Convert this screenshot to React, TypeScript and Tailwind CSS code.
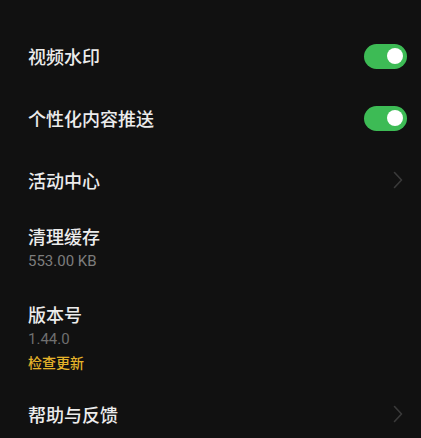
import React from 'react';

const font = { fontFamily: '"Noto Sans CJK SC", "Liberation Sans", sans-serif' };
const num = { fontFamily: '"Roboto", "Liberation Sans", sans-serif' };

function Toggle() {
    return (
        <div className="w-[43px] h-[25px] rounded-full bg-[#3dbb55] flex items-center justify-end pr-[4px]">
            <div className="w-[16px] h-[16px] rounded-full bg-white" />
        </div>
    );
}

function Chevron() {
    return (
        <svg width="10" height="18" viewBox="0 0 10 18" fill="none" className="mr-[4px]">
            <path d="M1.5 1.5 L8.5 9 L1.5 16.5" stroke="#3a3a3a" strokeWidth="1.6" strokeLinecap="round" strokeLinejoin="round" />
        </svg>
    );
}

export default function App() {
    return (
        <div className="w-[421px] h-[438px] bg-[#111111] overflow-hidden pt-[25px] pl-[28px] pr-[14px]" style={font}>
            {/* 开关 */}
            <div className="h-[62px] flex items-center justify-between">
                <span className="text-[18px] leading-[26px] font-medium text-[#ececec]">视频水印</span>
                <Toggle />
            </div>
            <div className="h-[62px] flex items-center justify-between">
                <span className="text-[18px] leading-[26px] font-medium text-[#ececec]">个性化内容推送</span>
                <Toggle />
            </div>
            <div className="h-[62px] flex items-center justify-between">
                <span className="text-[18px] leading-[26px] font-medium text-[#ececec]">活动中心</span>
                <Chevron />
            </div>

            {/* 缓存 */}
            <div className="pt-[12px] pb-[15px]">
                <p className="text-[18px] leading-[26px] font-medium text-[#ececec]">清理缓存</p>
                <p className="mt-[2px] text-[15px] leading-[20px] text-[#7d7d7d]" style={num}>553.00 KB</p>
            </div>

            {/* 版本 */}
            <div className="pt-[15px] pb-[14px]">
                <p className="text-[18px] leading-[26px] font-medium text-[#ececec]">版本号</p>
                <p className="mt-[2px] text-[15px] leading-[20px] text-[#6f6f6f]" style={num}>1.44.0</p>
                <p className="mt-[3px] text-[14px] leading-[20px] font-medium text-[#e5b32a]">检查更新</p>
            </div>

            <div className="pt-[15px] flex items-center justify-between">
                <span className="text-[18px] leading-[26px] font-medium text-[#ececec]">帮助与反馈</span>
                <Chevron />
            </div>
        </div>
    );
}
